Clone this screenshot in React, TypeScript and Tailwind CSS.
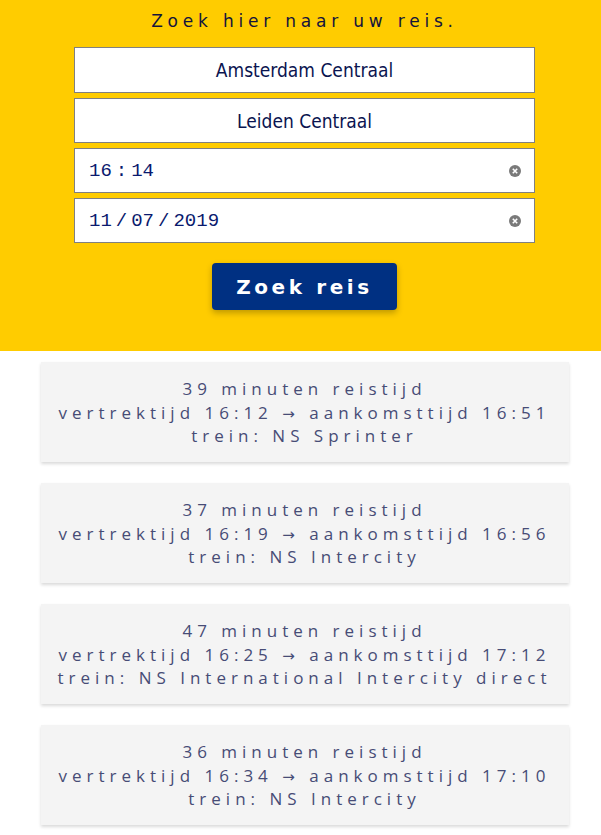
import React from 'react';

type Trip = { duur: number; vertrek: string; aankomst: string; trein: string };

const trips: Trip[] = [
  { duur: 39, vertrek: '16:12', aankomst: '16:51', trein: 'NS Sprinter' },
  { duur: 37, vertrek: '16:19', aankomst: '16:56', trein: 'NS Intercity' },
  { duur: 47, vertrek: '16:25', aankomst: '17:12', trein: 'NS International Intercity direct' },
  { duur: 36, vertrek: '16:34', aankomst: '17:10', trein: 'NS Intercity' },
];

const ClearIcon = () => (
  <svg width="12" height="12" viewBox="0 0 12 12" className="shrink-0">
    <circle cx="6" cy="6" r="6" fill="#7a7a7a" />
    <path d="M3.8 3.8 L8.2 8.2 M8.2 3.8 L3.8 8.2" stroke="#fff" strokeWidth="1.6" />
  </svg>
);

// date/time field: segments with a bit of room around the separators
const Segments = ({ parts, sep }: { parts: string[]; sep: string }) => (
  <span className="flex">
    {parts.map((p, i) => (
      <React.Fragment key={i}>
        {i > 0 && <span className="mx-[4px]">{sep}</span>}
        <span>{p}</span>
      </React.Fragment>
    ))}
  </span>
);

const App: React.FC = () => {
  return (
    <div className="min-h-screen bg-white">
      <div className="bg-[#ffcc00] pt-[10px] pb-[41px] pl-[8px] flex flex-col items-center">
        <h1 className="text-[17px] leading-[22px] tracking-[4.8px] text-[#14143c] font-['DejaVu_Sans',sans-serif] mb-[15px]">
          Zoek hier naar uw reis.
        </h1>
        <div className="w-[461px] flex flex-col gap-[5px]">
          <div className="h-[46px] pt-[1px] bg-white border border-[#808080] flex items-center justify-center text-[19px] text-[#0a1450] font-['DejaVu_Sans_Condensed','DejaVu_Sans',sans-serif]">
            Amsterdam Centraal
          </div>
          <div className="h-[45px] pt-[1px] bg-white border border-[#808080] flex items-center justify-center text-[19px] text-[#0a1450] font-['DejaVu_Sans_Condensed','DejaVu_Sans',sans-serif]">
            Leiden Centraal
          </div>
          <div className="h-[45px] pt-[1px] bg-white border border-[#808080] flex items-center justify-between pl-[14px] pr-[13px] text-[19px] text-[#0a1a6e] font-['Liberation_Mono',monospace]">
            <Segments parts={['16', '14']} sep=":" />
            <ClearIcon />
          </div>
          <div className="h-[45px] pt-[1px] bg-white border border-[#808080] flex items-center justify-between pl-[14px] pr-[13px] text-[19px] text-[#0a1a6e] font-['Liberation_Mono',monospace]">
            <Segments parts={['11', '07', '2019']} sep="/" />
            <ClearIcon />
          </div>
        </div>
        <button className="mt-[20px] w-[185px] h-[47px] rounded-[4px] bg-[#003082] text-white font-bold text-[20px] tracking-[3.6px] font-['DejaVu_Sans',sans-serif] shadow-[0_3px_6px_rgba(0,0,0,0.25)]">
          Zoek reis
        </button>
      </div>
      <div className="flex flex-col items-center gap-[21px] pt-[11px] pb-[10px] pl-[8px]">
        {trips.map((t, i) => (
          <div
            key={i}
            className="w-[528px] h-[100px] pt-[1px] bg-[#f4f4f4] shadow-[0_2px_3px_rgba(0,0,0,0.15)] flex flex-col items-center justify-center text-[17px] leading-[23.5px] tracking-[5px] text-[#474c76] font-['Open_Sans',sans-serif]"
          >
            <div className="h-[23.5px]">{t.duur} minuten reistijd</div>
            <div className="h-[23.5px]">vertrektijd {t.vertrek} <span className="font-['DejaVu_Sans',sans-serif] text-[15px] leading-[0]">→</span> aankomsttijd {t.aankomst}</div>
            <div className="h-[23.5px]">trein: {t.trein}</div>
          </div>
        ))}
      </div>
    </div>
  );
};

export default App;
